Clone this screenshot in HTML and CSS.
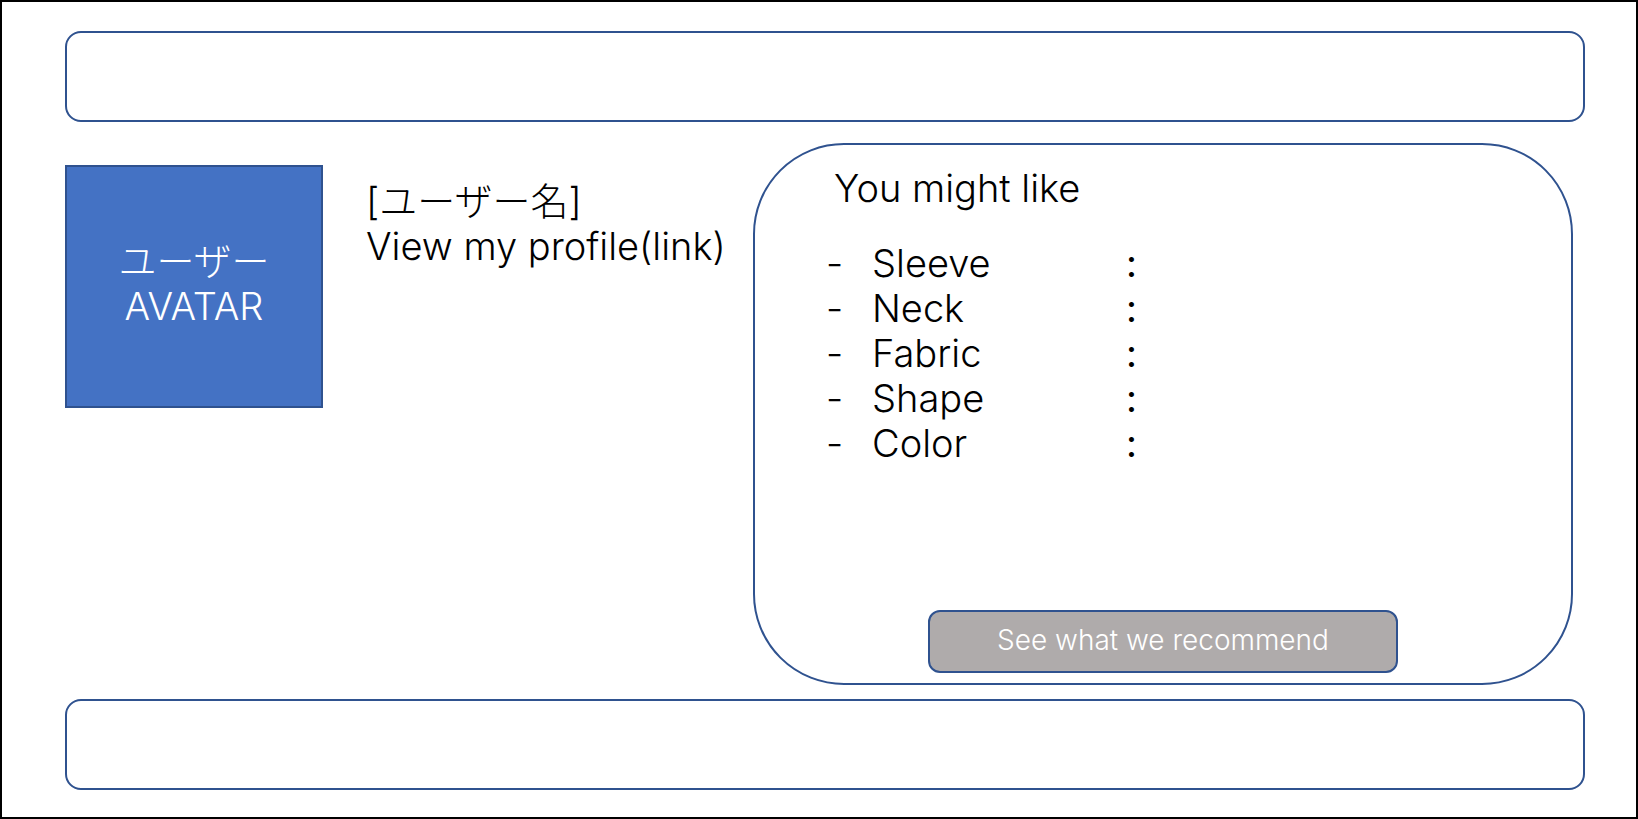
FILE: index.html
```html
<!DOCTYPE html>
<html lang="ja">
<head>
<meta charset="utf-8">
<title>User page</title>
<link rel="stylesheet" href="styles.css">
</head>
<body class="page">
  <header class="bar"></header>
  <main class="content">
    <section class="user">
      <div class="avatar">ユーザー<br>AVATAR</div>
      <div class="user-info">
        <p class="user-name">[ユーザー名]</p>
        <a class="profile-link" href="#profile">View my profile(link)</a>
      </div>
    </section>
    <section class="likes">
      <h1 class="likes-title">You might like</h1>
      <ul class="traits">
        <li class="trait"><span>-</span><span>Sleeve</span><span class="colon">:</span></li>
        <li class="trait"><span>-</span><span>Neck</span><span class="colon">:</span></li>
        <li class="trait"><span>-</span><span>Fabric</span><span class="colon">:</span></li>
        <li class="trait"><span>-</span><span>Shape</span><span class="colon">:</span></li>
        <li class="trait"><span>-</span><span>Color</span><span class="colon">:</span></li>
      </ul>
      <button class="recommend" type="button">See what we recommend</button>
    </section>
  </main>
  <footer class="bar"></footer>
</body>
</html>
```
FILE: styles.css
```css
* {
  box-sizing: border-box;
}

.page {
  display: flex;
  flex-direction: column;
  min-height: 100vh;
  margin: 0;
  padding: 29px 51px 27px 63px;
  border: 2px solid #000;
  background: #fff;
  color: #000;
  font-family: Inter, "Noto Sans CJK JP", sans-serif;
  font-size: 38px;
  font-weight: 300;
  line-height: 45px;
}

.bar {
  height: 91px;
  border: 2px solid #2f528f;
  border-radius: 16px;
}

.content {
  display: grid;
  flex: 1;
  grid-template-columns: 688fr 820fr;
  padding: 21px 12px 14px 0;
}

.user {
  display: flex;
  align-items: flex-start;
  gap: 43px;
  padding-top: 22px;
}

.avatar {
  display: flex;
  flex: none;
  align-items: center;
  justify-content: center;
  width: 258px;
  height: 243px;
  padding-bottom: 6px;
  border: 2px solid #2f528f;
  background: #4472c4;
  color: #fff;
  text-align: center;
}

.user-info {
  padding-top: 14px;
  white-space: nowrap;
}

.user-name {
  margin: 0;
}

.profile-link {
  color: inherit;
  text-decoration: none;
}

.likes {
  display: flex;
  flex-direction: column;
  padding: 21px 24px 10px 71px;
  border: 2px solid #2f528f;
  border-radius: 91px;
}

.likes-title {
  margin: 0;
  padding-left: 8px;
  font-size: 38px;
  font-weight: 300;
}

.traits {
  margin: 30px 0 0;
  padding: 0;
  list-style: none;
}

.trait {
  display: grid;
  grid-template-columns: 46px 254px 1fr;
}

.colon {
  font-weight: 400;
}

.recommend {
  align-self: center;
  width: 470px;
  height: 63px;
  margin: auto 24px 0 -23px;
  padding: 0 0 4px;
  border: 2px solid #2f528f;
  border-radius: 12px;
  background: #afabab;
  color: #fff;
  font-family: inherit;
  font-size: 28px;
  font-weight: 300;
}
```
